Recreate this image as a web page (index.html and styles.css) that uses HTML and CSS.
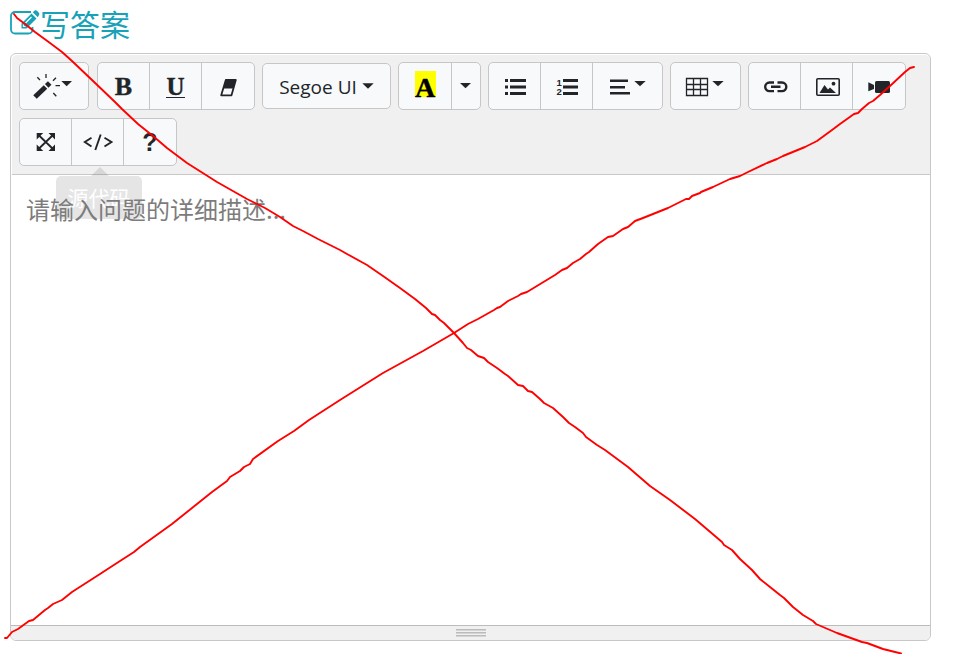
FILE: index.html
```
<!DOCTYPE html>
<html lang="zh-CN">
<head>
  <meta charset="UTF-8">
  <title>写答案</title>
  <link rel="stylesheet" href="styles.css">
</head>
<body>
  <h2 class="title">
    <svg class="title-icon" width="30" height="27" viewBox="0 0 30 27">
      <path d="M21 3H5a4 4 0 0 0-4 4V20.500A4 4 0 0 0 5 24.500H18.500a4 4 0 0 0 4-4V18" fill="none" stroke="#17a2b8" stroke-width="1.800"/>
      <path d="M11.500 14.500L21.500 4.500L26.500 9.500L16.500 19.500H11.500ZM22.800 3.200L25 1.300Q26 .8 27 1.800L29 4Q29.800 5 29 6L27.800 8.200Z" fill="#17a2b8"/>
      <path d="M13.500 15.500V17.500H15.500M15.500 14L21.500 8" fill="none" stroke="#fff" stroke-width="1.200"/>
    </svg>
    <span>写答案</span>
  </h2>

  <div class="editor">
    <div class="toolbar">
      <div class="btn-group">
        <button class="btn wide">
          <svg width="68" height="46" viewBox="0 0 68 46">
            <path d="M15 34L25.500 24" stroke="#212529" stroke-width="5"/>
            <path d="M26.700 22.900L29.700 20" stroke="#212529" stroke-width="5"/>
            <path d="M17.300 14.300L20 17M26 11V15M36 14.700L33 17.700M35.500 22.700H40M33.300 30L36.300 33.300" stroke="#212529" stroke-width="1.300"/>
            <path d="M41.300 18H52L46.700 23.300Z"/>
          </svg>
        </button>
      </div>

      <div class="btn-group">
        <button class="btn"><span class="letter bold">B</span></button>
        <button class="btn"><span class="letter underline">U</span></button>
        <button class="btn">
          <svg width="52" height="46" viewBox="0 0 52 46">
            <path d="M23.800 17H33.800L29.500 32.300H19.200Z" fill="none" stroke="#212529" stroke-width="1.800" stroke-linejoin="round"/>
            <path d="M23.800 17H33.800L31.300 25.500H21.300Z"/>
          </svg>
        </button>
      </div>

      <div class="btn-group font-group">
        <button class="btn font-name">
          <span>Segoe UI</span>
          <svg width="12" height="6" viewBox="0 0 12 6"><path d="M.3 .2H11.700L6 5.800Z"/></svg>
        </button>
      </div>

      <div class="btn-group">
        <button class="btn color-btn"><span class="letter color">A</span></button>
        <button class="btn narrow">
          <svg width="28" height="46" viewBox="0 0 28 46"><path d="M8 20H19L13.500 25.300Z"/></svg>
        </button>
      </div>

      <div class="btn-group">
        <button class="btn">
          <svg width="51" height="46" viewBox="0 0 51 46">
            <path d="M16 16h3v3h-3zM21 16h16v3H21zM16 22.500h3v3h-3zM21 22.500h16v3H21zM16 29h3v3h-3zM21 29h16v3H21z"/>
          </svg>
        </button>
        <button class="btn">
          <svg width="51" height="46" viewBox="0 0 51 46">
            <path d="M22 16h15v3H22zM22 22.500h15v3H22zM22 29h15v3H22z"/>
            <text class="digit" x="15.500" y="22.500">1</text>
            <text class="digit" x="15.500" y="32.300">2</text>
          </svg>
        </button>
        <button class="btn wide">
          <svg width="69" height="46" viewBox="0 0 69 46">
            <path d="M17 16.500h18V19H17zM17 23h15v2.500H17zM17 29h20v2.500H17z"/>
            <path d="M41.300 18H52.700L47 23.300Z"/>
          </svg>
        </button>
      </div>

      <div class="btn-group">
        <button class="btn wide table-btn">
          <svg width="69" height="46" viewBox="0 0 69 46">
            <path d="M15.500 15.500H36.500V32.500H15.500ZM22.500 15.500V32.500M29.500 15.500V32.500M15.500 21.500H36.500M15.500 26.500H36.500" fill="none" stroke="#212529" stroke-width="1.300"/>
            <path d="M41.300 18H52.700L47 23.300Z"/>
          </svg>
        </button>
      </div>

      <div class="btn-group">
        <button class="btn">
          <svg width="51" height="46" viewBox="0 0 51 46">
            <path d="M25 19.500H20.500a4.300 4.300 0 0 0 0 8.600H25M28.500 28.100H33a4.300 4.300 0 0 0 0-8.600H28.500M22 23.800H31.500" fill="none" stroke="#212529" stroke-width="2.400"/>
          </svg>
        </button>
        <button class="btn">
          <svg width="51" height="46" viewBox="0 0 51 46">
            <rect x="15.800" y="15.800" width="22.400" height="16.400" rx="1" fill="none" stroke="#212529" stroke-width="1.600"/>
            <path d="M18.500 30L23.500 22L27 26.500L29 24.500L35 30Z"/>
            <circle cx="32.500" cy="20.700" r="1.900"/>
          </svg>
        </button>
        <button class="btn">
          <svg width="52" height="46" viewBox="0 0 52 46">
            <rect x="22" y="18" width="15" height="12" rx="1.500"/>
            <path d="M15.300 19.300L21 22V26L15.300 28.300Z"/>
          </svg>
        </button>
      </div>

      <div class="btn-group">
        <button class="btn">
          <svg width="51" height="46" viewBox="0 0 51 46">
            <path d="M18.500 16L33 30M33 16L18.500 30" stroke="#212529" stroke-width="1.800"/>
            <path d="M16.700 14h6.500l-6.500 6.500zM35 14v6.500L28.500 14zM16.700 32v-6.500l6.500 6.500zM35 32h-6.500l6.500-6.500z"/>
          </svg>
        </button>
        <button class="btn code-btn">
          <svg width="52" height="46" viewBox="0 0 52 46">
            <path d="M19.500 18.700L12.800 23L19.500 27.500M28.700 15.500L23.300 31M32.500 18.700L39.500 23L32.500 27.500" fill="none" stroke="#212529" stroke-width="1.900"/>
          </svg>
          <span class="tooltip">源代码</span>
        </button>
        <button class="btn"><span class="help">?</span></button>
      </div>
    </div>

    <div class="content">请输入问题的详细描述...</div>

    <div class="statusbar">
      <div class="grip"></div>
      <div class="grip"></div>
      <div class="grip"></div>
    </div>
  </div>

  <svg class="strokes" width="965" height="654" viewBox="0 0 965 654">
    <polyline points="14,14 17,18 25,24 35,32 50,43 62,52 72,61 92,80 115,102 122,109 138,124 153,136 167,148 187,163 217,182 247,199 265,208 280,217 293,226 303,231 318,239 340,250 347,254 367,265 383,276 400,288 415,299 426,308 432,314 435,315 440,320 444,323 454,333 463,343 467,348 471,350 478,356 484,358 488,362 497,368 505,374 508,376 518,385 523,386 528,391 532,392 540,399 544,403 553,408 563,417 569,423 575,427 583,433 586,437 597,445 605,450 628,467 650,486 670,500 695,519 722,542 724,545 732,550 740,559 752,570 760,579 770,587 780,595 784,598 793,607 803,615 813,621 816,624 837,633 862,642 867,643 883,649 901,653.500"/>
    <polyline points="914,67 910,68 905,72 890,86 880,95 873,101 869,103 862,109 858,113 854,114 840,124 832,130 817,141 805,147 783,156 777,159 767,163 748,172 740,176 730,179 713,187 701,192 700,193 692,196 689,199 686,199 668,208 653,214 643,218 635,221 628,227 623,229 613,236 608,237 598,244 589,252 586,254 580,259 573,263 567,268 562,270 555,275 527,292 521,294 518,296 508,301 500,307 497,308 494,310 478,319 468,324 454,333 423,351 383,373 340,400 309,420 294,431 278,441 253,459 250,464 244,467 240,471 230,477 227,481 212,492 172,524 140,547 134,552 120,561 100,574 72,592 62,600 53,604 48,608 45,610 33,620 29,621 18,629 12,632 7,638 5,638"/>
  </svg>
</body>
</html>
```
FILE: styles.css
```
* {
  box-sizing: border-box;
}
body {
  margin: 0;
  padding: 0 10px;
  height: 654px;
  overflow: hidden;
  background: white;
  font-family: "Noto Sans", "Noto Sans CJK SC", sans-serif;
  color: #212529;
}
.title {
  display: flex;
  height: 53px;
  margin: 0;
  color: #17a2b8;
  font-family: "Noto Sans CJK SC", sans-serif;
  font-size: 30px;
  font-weight: 400;
  line-height: 46px;
}
.title-icon {
  margin-top: 9px;
}
.editor {
  width: 921px;
  height: 588px;
  display: flex;
  flex-direction: column;
  border: 1px solid #c8c8c8;
  border-radius: 6px;
}
.toolbar {
  display: flex;
  flex-wrap: wrap;
  align-content: flex-start;
  align-items: center;
  gap: 8px 7px;
  height: 120px;
  margin: 1px 0 0 1px;
  padding: 7px;
  background: #f0f0f0;
  border-bottom: 1px solid #c8c8c8;
  border-radius: 5px 5px 0 0;
}
.btn-group {
  display: flex;
  height: 48px;
  border: 1px solid #c4c6c8;
  border-radius: 5px;
  background: #f8f9fa;
}
.btn-group:first-child {
  margin-right: 1px;
}
.btn {
  position: relative;
  display: flex;
  align-items: center;
  justify-content: center;
  width: 52px;
  padding: 0;
  border: none;
  background: none;
  color: #212529;
  font-family: inherit;
}
.btn:first-child {
  width: 51px;
}
.btn + .btn {
  width: 52px;
  border-left: 1px solid #c4c6c8;
}
.btn:last-child {
  width: 53px;
}
.btn.wide {
  width: 70px;
}
.btn.wide:first-child {
  width: 68px;
}
.btn.table-btn:first-child {
  width: 69px;
}
.btn.color-btn {
  width: 52px;
}
.btn.narrow {
  width: 29px;
}
.btn svg {
  flex: none;
  fill: #212529;
}
.letter {
  font-family: "Liberation Serif", serif;
  font-weight: bold;
  -webkit-text-stroke: 0.4px;
}
.bold {
  margin-top: 2px;
  font-size: 26px;
}
.underline {
  margin-top: 2px;
  height: 21px;
  border-bottom: 1px solid #212529;
  font-size: 25px;
  line-height: 19px;
}
.color {
  width: 21px;
  height: 26px;
  margin-bottom: 4px;
  background: yellow;
  color: black;
  font-size: 28px;
  line-height: 34px;
}
.digit {
  font-family: "Liberation Sans", sans-serif;
  font-size: 9.5px;
  font-weight: bold;
}
.font-group {
  height: 46px;
}
.font-name.btn {
  width: 127px;
  gap: 5px;
  font-family: "Open Sans", sans-serif;
  font-size: 19px;
}
.font-name span {
  margin-top: 1px;
}
.help {
  font-family: "Liberation Sans", sans-serif;
  font-size: 25px;
  font-weight: bold;
}
.tooltip {
  position: absolute;
  top: 57px;
  left: -16px;
  width: 86px;
  height: 43px;
  border-radius: 5px;
  background: rgba(0, 0, 0, 0.1);
  color: white;
  font-family: "Noto Sans CJK SC", sans-serif;
  font-size: 21px;
  line-height: 43px;
}
.tooltip::before {
  content: "";
  position: absolute;
  top: -9px;
  left: 35px;
  border: 9px solid transparent;
  border-top: none;
  border-bottom-color: rgba(0, 0, 0, 0.1);
}
.content {
  position: relative;
  flex: 1;
  padding: 16px 15px;
  color: #7c7c7c;
  font-family: "Noto Sans CJK SC", sans-serif;
  font-size: 24px;
  line-height: 36px;
}
.statusbar {
  height: 15px;
  padding-top: 3px;
  border-top: 1px solid #bbb;
  border-radius: 0 0 5px 5px;
  background: #f0f0f0;
}
.grip {
  width: 30px;
  height: 2px;
  margin: 0 auto 1px;
  border-top: 1px solid #bbb;
  background: #d4d4d4;
}
.strokes {
  position: absolute;
  top: 0;
  left: 0;
  fill: none;
  stroke: red;
  stroke-width: 1.9;
  stroke-linejoin: round;
  stroke-linecap: round;
  pointer-events: none;
}
```
